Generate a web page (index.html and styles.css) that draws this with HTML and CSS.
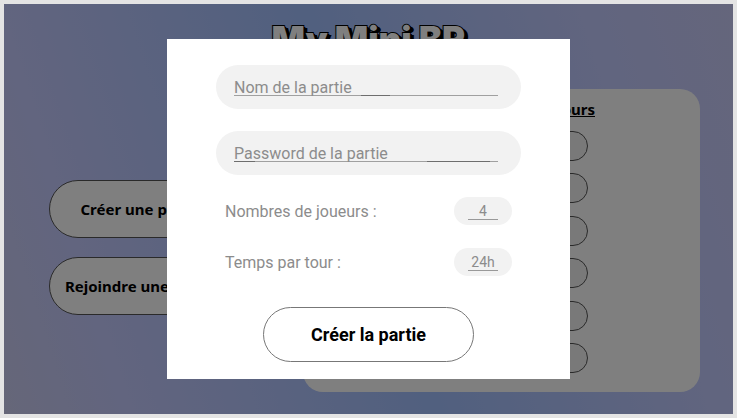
FILE: index.html
```html
<!DOCTYPE html>
<html lang="fr">
<head>
<meta charset="utf-8">
<title>My Mini BR</title>
<link rel="stylesheet" href="styles.css">
</head>
<body>
<div class="screen">
  <div class="home">
    <h1 class="title">My Mini BR</h1>
    <div class="columns">
      <nav class="menu">
        <button class="menu-button" type="button">Créer une partie</button>
        <button class="menu-button" type="button">Rejoindre une partie</button>
      </nav>
      <section class="games">
        <h2 class="games-title">Parties en cours</h2>
        <ul class="games-list">
          <li class="game"></li>
          <li class="game"></li>
          <li class="game"></li>
          <li class="game"></li>
          <li class="game"></li>
          <li class="game"></li>
        </ul>
      </section>
    </div>
  </div>
  <div class="overlay">
    <form class="dialog">
      <div class="field"><input class="text-input name-input" type="text" aria-label="Nom de la partie" placeholder="Nom de la partie"></div>
      <div class="field"><input class="text-input password-input" type="text" aria-label="Password de la partie" placeholder="Password de la partie"></div>
      <div class="option">
        <label for="players">Nombres de joueurs :</label>
        <span class="value"><input class="value-input" id="players" type="text" value="4"></span>
      </div>
      <div class="option">
        <label for="time">Temps par tour :</label>
        <span class="value"><input class="value-input" id="time" type="text" value="24h"></span>
      </div>
      <button class="submit" type="button">Créer la partie</button>
    </form>
  </div>
</div>
</body>
</html>
```
FILE: styles.css
```css
* { box-sizing: border-box; }

body {
  margin: 0;
  padding: 4px;
  height: 100vh;
  background: #e4e4e4;
  font-family: Roboto, sans-serif;
}

.screen {
  position: relative;
  height: 100%;
  overflow: hidden;
  background: linear-gradient(72deg, #cccef2, #c4caff 15%, #a2c0ff 50%, #c2caff 82%, #caccf8);
}

.home {
  height: 100%;
  padding: 10px 33px 22px 45px;
  display: flex;
  flex-direction: column;
  font-family: "Noto Sans", sans-serif;
}

.title {
  margin: 0 12px 25px 0;
  text-align: center;
  font-family: Inter, sans-serif;
  font-weight: 900;
  font-size: 35px;
  line-height: 50px;
  color: #fff;
  -webkit-text-stroke: 2px #000;
  paint-order: stroke fill;
  text-shadow: 1px 1px #000, 2px 1px #000, 3px 2px #000, 4px 2px #000;
}

.columns {
  flex: 1;
  display: flex;
  justify-content: space-between;
}

.menu {
  width: 185px;
  padding-top: 91px;
  display: flex;
  flex-direction: column;
  gap: 19px;
}

.menu-button {
  height: 58px;
  padding: 0;
  border: 1px solid #555;
  border-radius: 29px;
  background: #fff;
  font: bold 15px/20px "Noto Sans", sans-serif;
  color: #000;
}

.games {
  width: 397px;
  padding: 10px 0 19px;
  display: flex;
  flex-direction: column;
  border-radius: 20px;
  background: #fff;
}

.games-title {
  margin: 0 0 12px;
  padding-right: 105px;
  text-align: right;
  font-size: 15px;
  line-height: 20px;
  text-decoration: underline;
}

.games-list {
  flex: 1;
  margin: 0;
  padding: 0 112px;
  list-style: none;
  display: flex;
  flex-direction: column;
  justify-content: space-between;
}

.game {
  height: 30px;
  border: 1px solid #555;
  border-radius: 15px;
  background: #f2f2f2;
}

.overlay {
  position: absolute;
  inset: 0;
  display: flex;
  align-items: center;
  justify-content: center;
  background: rgba(0, 0, 0, 0.5);
}

.dialog {
  width: 403px;
  padding: 26px 49px 17px;
  display: flex;
  flex-direction: column;
  background: #fff;
  font-size: 16px;
  color: #8c8c8c;
}

.field {
  height: 44px;
  margin-bottom: 22px;
  padding: 12px 23px 0 18px;
  border-radius: 22px;
  background: #f2f2f2;
}

.text-input,
.value-input {
  display: block;
  width: 100%;
  height: 19px;
  border: 0;
  border-radius: 0;
  padding: 1px 0 0;
  background: linear-gradient(#999, #999) bottom / 100% 1px no-repeat;
  font: 16px/18px Roboto, sans-serif;
  color: #8c8c8c;
  outline: 0;
}

.name-input {
  background-image: linear-gradient(90deg, #a0a0a0 48%, #6e6e6e 48% 59%, #a0a0a0 59%);
}

.password-input {
  background-image: linear-gradient(90deg, #6e6e6e 8%, #a0a0a0 8% 73%, #6e6e6e 73% 97%, #a0a0a0 97%);
}

.text-input::placeholder { color: #8c8c8c; }

.option {
  height: 28px;
  margin-bottom: 23px;
  padding: 0 9px;
  display: flex;
  align-items: center;
  justify-content: space-between;
}

.value {
  width: 58px;
  height: 28px;
  padding: 4px 14px 0;
  border-radius: 14px;
  background: #f2f2f2;
}

.value-input {
  font-size: 14px;
  text-align: center;
}

.submit {
  align-self: center;
  width: 211px;
  height: 55px;
  margin-top: 8px;
  border: 1px solid #777;
  border-radius: 28px;
  background: #fff;
  font: bold 18px/24px Roboto, sans-serif;
  color: #000;
}
```
